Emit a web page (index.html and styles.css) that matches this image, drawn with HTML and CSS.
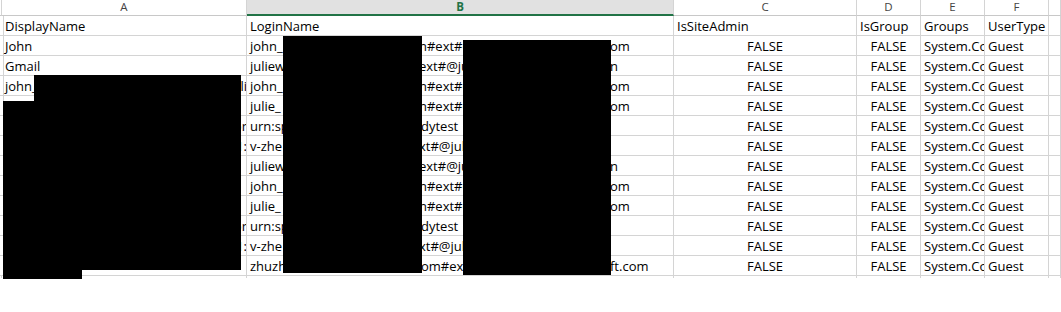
FILE: index.html
```html
<!DOCTYPE html>
<html>
<head>
<meta charset="utf-8">
<link rel="stylesheet" href="styles.css">
</head>
<body>
<div class="sheet">
  <div class="grid">
    <div class="hc"></div>
    <div class="hc">A</div>
    <div class="hc sel">B</div>
    <div class="hc">C</div>
    <div class="hc">D</div>
    <div class="hc">E</div>
    <div class="hc">F</div>
    <div class="hc"></div>

    <div class="c"></div>
    <div class="c">DisplayName</div>
    <div class="c">LoginName</div>
    <div class="c">IsSiteAdmin</div>
    <div class="c">IsGroup</div>
    <div class="c">Groups</div>
    <div class="c">UserType</div>
    <div class="c"></div>

    <div class="c"></div>
    <div class="c">John</div>
    <div class="c b"><span class="s1">john_</span><span class="s2">n#ext#@j</span><span class="s3">om</span></div>
    <div class="c ctr">FALSE</div>
    <div class="c ctr">FALSE</div>
    <div class="c">System.Collections</div>
    <div class="c">Guest</div>
    <div class="c"></div>

    <div class="c"></div>
    <div class="c">Gmail</div>
    <div class="c b"><span class="s1">juliew</span><span class="s2">ext#@ju</span><span class="s3">n</span></div>
    <div class="c ctr">FALSE</div>
    <div class="c ctr">FALSE</div>
    <div class="c">System.Collections</div>
    <div class="c">Guest</div>
    <div class="c"></div>

    <div class="c"></div>
    <div class="c a"><span>john_</span><span class="frag">li</span></div>
    <div class="c b"><span class="s1">john_</span><span class="s2">n#ext#@j</span><span class="s3">om</span></div>
    <div class="c ctr">FALSE</div>
    <div class="c ctr">FALSE</div>
    <div class="c">System.Collections</div>
    <div class="c">Guest</div>
    <div class="c"></div>

    <div class="c"></div>
    <div class="c"></div>
    <div class="c b"><span class="s1">julie_</span><span class="s2">n#ext#@j</span><span class="s3">om</span></div>
    <div class="c ctr">FALSE</div>
    <div class="c ctr">FALSE</div>
    <div class="c">System.Collections</div>
    <div class="c">Guest</div>
    <div class="c"></div>

    <div class="c"></div>
    <div class="c a"><span></span><span class="frag">or</span></div>
    <div class="c b"><span class="s1">urn:spo</span><span class="s2 off">dytest</span><span class="s3"></span></div>
    <div class="c ctr">FALSE</div>
    <div class="c ctr">FALSE</div>
    <div class="c">System.Collections</div>
    <div class="c">Guest</div>
    <div class="c"></div>

    <div class="c"></div>
    <div class="c a"><span></span><span class="frag">1:</span></div>
    <div class="c b"><span class="s1">v-zhe</span><span class="s2">xt#@jul</span><span class="s3"></span></div>
    <div class="c ctr">FALSE</div>
    <div class="c ctr">FALSE</div>
    <div class="c">System.Collections</div>
    <div class="c">Guest</div>
    <div class="c"></div>

    <div class="c"></div>
    <div class="c"></div>
    <div class="c b"><span class="s1">juliew</span><span class="s2">ext#@ju</span><span class="s3">n</span></div>
    <div class="c ctr">FALSE</div>
    <div class="c ctr">FALSE</div>
    <div class="c">System.Collections</div>
    <div class="c">Guest</div>
    <div class="c"></div>

    <div class="c"></div>
    <div class="c"></div>
    <div class="c b"><span class="s1">john_</span><span class="s2">n#ext#@j</span><span class="s3">om</span></div>
    <div class="c ctr">FALSE</div>
    <div class="c ctr">FALSE</div>
    <div class="c">System.Collections</div>
    <div class="c">Guest</div>
    <div class="c"></div>

    <div class="c"></div>
    <div class="c"></div>
    <div class="c b"><span class="s1">julie_</span><span class="s2">n#ext#@j</span><span class="s3">om</span></div>
    <div class="c ctr">FALSE</div>
    <div class="c ctr">FALSE</div>
    <div class="c">System.Collections</div>
    <div class="c">Guest</div>
    <div class="c"></div>

    <div class="c"></div>
    <div class="c a"><span></span><span class="frag">or</span></div>
    <div class="c b"><span class="s1">urn:spo</span><span class="s2 off">dytest</span><span class="s3"></span></div>
    <div class="c ctr">FALSE</div>
    <div class="c ctr">FALSE</div>
    <div class="c">System.Collections</div>
    <div class="c">Guest</div>
    <div class="c"></div>

    <div class="c"></div>
    <div class="c a"><span></span><span class="frag">1:</span></div>
    <div class="c b"><span class="s1">v-zhe</span><span class="s2">xt#@jul</span><span class="s3"></span></div>
    <div class="c ctr">FALSE</div>
    <div class="c ctr">FALSE</div>
    <div class="c">System.Collections</div>
    <div class="c">Guest</div>
    <div class="c"></div>

    <div class="c"></div>
    <div class="c"></div>
    <div class="c b"><span class="s1">zhuzh_</span><span class="s2 off">om#ex</span><span class="s3">ft.com</span></div>
    <div class="c ctr">FALSE</div>
    <div class="c ctr">FALSE</div>
    <div class="c">System.Collections</div>
    <div class="c">Guest</div>
    <div class="c"></div>

    <div class="t"></div><div class="t"></div><div class="t"></div><div class="t"></div>
    <div class="t"></div><div class="t"></div><div class="t"></div><div class="t"></div>
  </div>

  <div class="redact r-a1"></div>
  <div class="redact r-a2"></div>
  <div class="redact r-a3"></div>
  <div class="redact r-b1"></div>
  <div class="redact r-b2"></div>
</div>
</body>
</html>
```

FILE: styles.css
```css
html, body {
  margin: 0;
  padding: 0;
  background: #ffffff;
}

.sheet {
  position: relative;
  width: 1061px;
  height: 312px;
  overflow: hidden;
  font-family: "Open Sans", Lato, sans-serif;
  color: #000;
}

.grid {
  display: grid;
  grid-template-columns: 2px 245px 427px 183px 64px 64px 64px 1fr;
  grid-template-rows: 16px repeat(13, 20px) 2px;
}

.hc {
  box-sizing: border-box;
  border-right: 1px solid #d4d4d4;
  border-bottom: 1px solid #c8c8c8;
  font-size: 11.5px;
  line-height: 14px;
  color: #444;
  text-align: center;
  background: #fff;
}

.hc.sel {
  background: #e1e1e1;
  color: #217346;
  font-weight: bold;
  border-bottom: 2px solid #217346;
}

.c {
  box-sizing: border-box;
  border-right: 1px solid #d4d4d4;
  border-bottom: 1px solid #d4d4d4;
  font-size: 13px;
  line-height: 20px;
  padding-left: 3px;
  white-space: nowrap;
  overflow: hidden;
}

.t {
  box-sizing: border-box;
  border-right: 1px solid #d4d4d4;
}

.ctr {
  text-align: center;
  padding-left: 0;
}

.a {
  display: flex;
  justify-content: space-between;
}

.frag {
  margin-right: -1px;
}

.b {
  display: flex;
}

.s1 {
  width: 169px;
  flex: none;
}

.s2 {
  width: 191px;
  flex: none;
}

.s2.off {
  padding-left: 2px;
  width: 189px;
}

.s3 {
  flex: 1;
}

.redact {
  position: absolute;
  background: #000;
}

.r-a1 { left: 34px; top: 75px; width: 207px; height: 195px; }
.r-a2 { left: 3px; top: 101px; width: 238px; height: 169px; }
.r-a3 { left: 3px; top: 101px; width: 79px; height: 178px; }
.r-b1 { left: 283px; top: 36px; width: 139px; height: 237px; }
.r-b2 { left: 463px; top: 40px; width: 148px; height: 235px; }
```
